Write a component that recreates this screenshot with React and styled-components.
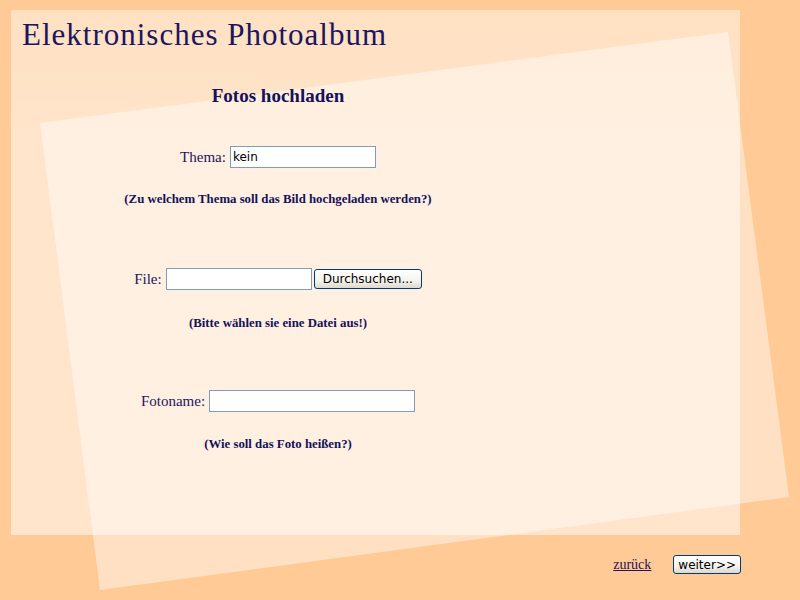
import React from "react";
import styled, { createGlobalStyle } from "styled-components";

const Global = createGlobalStyle`
  html, body { margin: 0; padding: 0; background: #ffca96; }
  body { font-family: "Liberation Serif", "Times New Roman", serif; }
`;

const Page = styled.div`
  position: relative;
  width: 800px;
  height: 600px;
  overflow: hidden;
  background: #ffca96;
  padding-top: 10px;
  box-sizing: border-box;
`;

const Panel = styled.div`
  margin-left: 11px;
  width: 729px;
  height: 525px;
  background: linear-gradient(to bottom, rgba(255,255,255,0.42) 0px, rgba(255,255,255,0.5) 120px);
  position: relative;
`;

const Decor = styled.svg`
  position: absolute;
  left: 0;
  top: 0;
  width: 800px;
  height: 600px;
  pointer-events: none;
`;

const Content = styled.div`
  position: relative;
  z-index: 1;
`;

const Title = styled.h1`
  margin: 0;
  padding: 8px 0 0 11px;
  font-family: "Book Antiqua", "Palatino Linotype", "Liberation Serif", serif;
  font-weight: normal;
  font-size: 31px;
  letter-spacing: 1px;
  line-height: 34px;
  color: #1b1660;
`;

const FormColumn = styled.div`
  width: 534px;
  text-align: center;
  color: #1b1660;
`;

const Heading = styled.h2`
  margin: 33px 0 0;
  font-size: 19px;
  line-height: 22px;
  font-weight: bold;
  color: #14125a;
`;

const Row = styled.div`
  display: flex;
  justify-content: center;
  align-items: center;
  gap: 4px;
  margin-top: ${(p) => p.$top}px;
  height: 22px;
`;

const Label = styled.span`
  font-size: 15px;
  color: #1b1660;
`;

const TextInput = styled.input`
  box-sizing: border-box;
  width: ${(p) => p.$w}px;
  height: 22px;
  border: 1px solid #7f9db9;
  background: #fff;
  padding: 1px 2px;
  font-family: "DejaVu Sans", Tahoma, sans-serif;
  font-size: 12px;
  color: #000;
  outline: none;
`;

const XPButton = styled.button`
  box-sizing: border-box;
  height: ${(p) => p.$h || 20}px;
  padding: 0 ${(p) => p.$px || 8}px;
  margin-left: ${(p) => p.$ml || 0}px;
  border: 1px solid #003c74;
  border-radius: 3px;
  background: linear-gradient(to bottom, #ffffff 0%, #f4f3ee 60%, #dcd8cc 100%);
  font-family: "DejaVu Sans", Tahoma, sans-serif;
  font-size: 12px;
  color: #000;
  cursor: pointer;
`;

const Hint = styled.div`
  margin-top: ${(p) => p.$top}px;
  font-size: 12.8px;
  line-height: 14px;
  font-weight: bold;
  color: #14125a;
`;

const Footer = styled.div`
  position: relative;
  z-index: 1;
  display: flex;
  justify-content: flex-end;
  align-items: center;
  gap: 22px;
  padding-right: 59px;
  margin-top: 20px;
`;

const BackLink = styled.a`
  font-size: 14px;
  color: #2a1060;
  text-decoration: underline;
`;

export default function App() {
  return (
    <>
      <Global />
      <Page>
        <Panel>
          <Content>
            <Title>Elektronisches Photoalbum</Title>
            <FormColumn>
              <Heading>Fotos hochladen</Heading>
              <Row $top={39}>
                <Label>Thema:</Label>
                <TextInput $w={146} defaultValue="kein" />
              </Row>
              <Hint $top={24}>(Zu welchem Thema soll das Bild hochgeladen werden?)</Hint>
              <Row $top={62}>
                <Label>File:</Label>
                <TextInput $w={146} />
                <XPButton $h={20} $px={8} $ml={-2}>Durchsuchen...</XPButton>
              </Row>
              <Hint $top={26}>(Bitte wählen sie eine Datei aus!)</Hint>
              <Row $top={60}>
                <Label>Fotoname:</Label>
                <TextInput $w={206} />
              </Row>
              <Hint $top={25}>(Wie soll das Foto heißen?)</Hint>
            </FormColumn>
          </Content>
        </Panel>
        <Decor viewBox="0 0 800 600">
          <polygon points="40,123 728,32 789,497 100,590" fill="#ffffff" fillOpacity="0.42" />
        </Decor>
        <Footer>
          <BackLink href="#">zurück</BackLink>
          <XPButton $h={19} $px={4}>weiter&gt;&gt;</XPButton>
        </Footer>
      </Page>
    </>
  );
}
